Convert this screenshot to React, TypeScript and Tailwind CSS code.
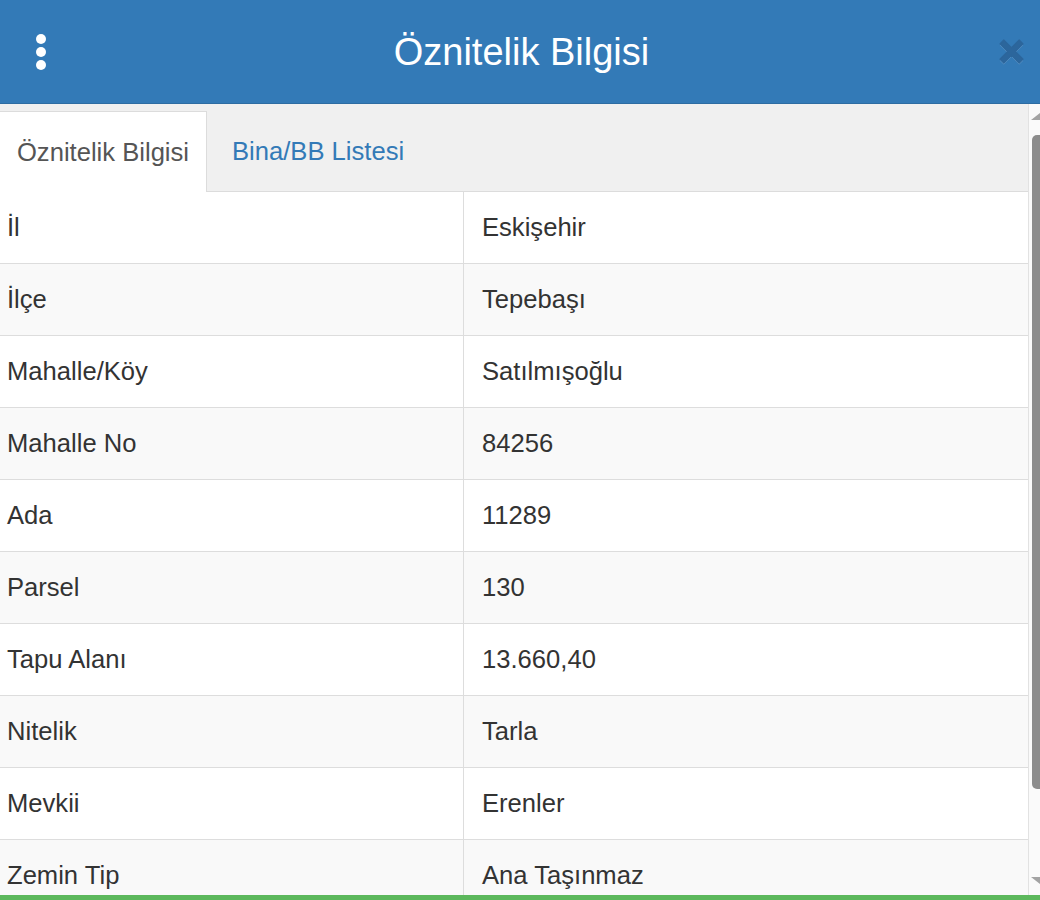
import { useState } from "react";

const rows = [
  { label: "İl", value: "Eskişehir" },
  { label: "İlçe", value: "Tepebaşı" },
  { label: "Mahalle/Köy", value: "Satılmışoğlu" },
  { label: "Mahalle No", value: "84256" },
  { label: "Ada", value: "11289" },
  { label: "Parsel", value: "130" },
  { label: "Tapu Alanı", value: "13.660,40" },
  { label: "Nitelik", value: "Tarla" },
  { label: "Mevkii", value: "Erenler" },
  { label: "Zemin Tip", value: "Ana Taşınmaz" },
];

const font = { fontFamily: '"Liberation Sans", Arial, sans-serif' };

const App = () => {
  const [tab, setTab] = useState("info");

  return (
    <div
      className="w-[1040px] h-[900px] overflow-hidden flex flex-col bg-white text-[#333]"
      style={font}
    >
      {/* HEADER */}
      <div className="h-[104px] shrink-0 bg-[#337ab7] border-b border-[#2d6ca2] flex items-center pl-[35px] pr-[15px]">
        <div className="w-[11px] flex flex-col items-center gap-[3px]">
          <span className="w-[10px] h-[10px] rounded-full bg-white" />
          <span className="w-[10px] h-[10px] rounded-full bg-white" />
          <span className="w-[10px] h-[10px] rounded-full bg-white" />
        </div>
        <div className="flex-1 text-center text-white text-[38px] leading-none">
          Öznitelik Bilgisi
        </div>
        <button className="w-[28px] h-[28px] flex items-center justify-center">
          <svg width="27" height="27" viewBox="0 0 28 28">
            <path
              d="M6 2 L14 10 L22 2 L26 6 L18 14 L26 22 L22 26 L14 18 L6 26 L2 22 L10 14 L2 6 Z"
              fill="#9bbde0"
              opacity="0.45"
              transform="translate(0 1.5)"
            />
            <path
              d="M6 2 L14 10 L22 2 L26 6 L18 14 L26 22 L22 26 L14 18 L6 26 L2 22 L10 14 L2 6 Z"
              fill="#2c669c"
              strokeLinejoin="round"
              stroke="#2c669c"
              strokeWidth="1.2"
            />
          </svg>
        </button>
      </div>

      {/* BODY */}
      <div className="flex-1 flex min-h-0">
        <div className="flex-1 flex flex-col min-w-0">
          {/* TABS */}
          <div className="h-[88px] shrink-0 bg-[#f0f0f0] border-b border-[#dcdcdc] flex items-end">
            <button
              onClick={() => setTab("info")}
              className={`h-[81px] w-[207px] -mb-px text-[25.6px] flex items-center justify-center ${
                tab === "info"
                  ? "bg-white text-[#555] border-t border-r border-[#dcdcdc]"
                  : "text-[#337ab7]"
              }`}
            >
              Öznitelik Bilgisi
            </button>
            <button
              onClick={() => setTab("bina")}
              className={`h-[81px] px-[25px] -mb-px text-[25.6px] flex items-center ${
                tab === "bina"
                  ? "bg-white text-[#555] border-t border-x border-[#dcdcdc]"
                  : "text-[#337ab7]"
              }`}
            >
              Bina/BB Listesi
            </button>
          </div>

          {/* TABLE */}
          <div className="flex flex-col">
            {rows.map((r, i) => (
              <div
                key={r.label}
                className={`h-[72px] shrink-0 flex border-b border-[#dddddd] text-[25.6px] ${
                  i % 2 === 1 ? "bg-[#f9f9f9]" : "bg-white"
                }`}
              >
                <div className="w-[464px] shrink-0 border-r border-[#dddddd] pl-[7px] flex items-center">
                  {r.label}
                </div>
                <div className="flex-1 pl-[18px] flex items-center">{r.value}</div>
              </div>
            ))}
          </div>
        </div>

        {/* SCROLLBAR */}
        <div className="w-[12px] shrink-0 bg-[#fafafa] border-l border-[#e2e2e2] flex flex-col items-end">
          <div className="h-[8px] mt-[9px] flex justify-end">
            <svg width="9" height="7" viewBox="0 0 9 7">
              <path d="M9 0 L9 7 L0 7 Z" fill="#a3a3a3" />
            </svg>
          </div>
          <div className="w-[8px] h-[654px] mt-[14px] bg-[#8c8c8c] rounded-tl-[5px] rounded-bl-[5px]" />
          <div className="flex-1" />
          <div className="h-[8px] mb-[10px] flex justify-end">
            <svg width="9" height="7" viewBox="0 0 9 7">
              <path d="M0 0 L9 0 L9 7 Z" fill="#a3a3a3" />
            </svg>
          </div>
        </div>
      </div>

      <div className="h-[5px] shrink-0 bg-[#5cb85c]" />
    </div>
  );
};

export default App;
